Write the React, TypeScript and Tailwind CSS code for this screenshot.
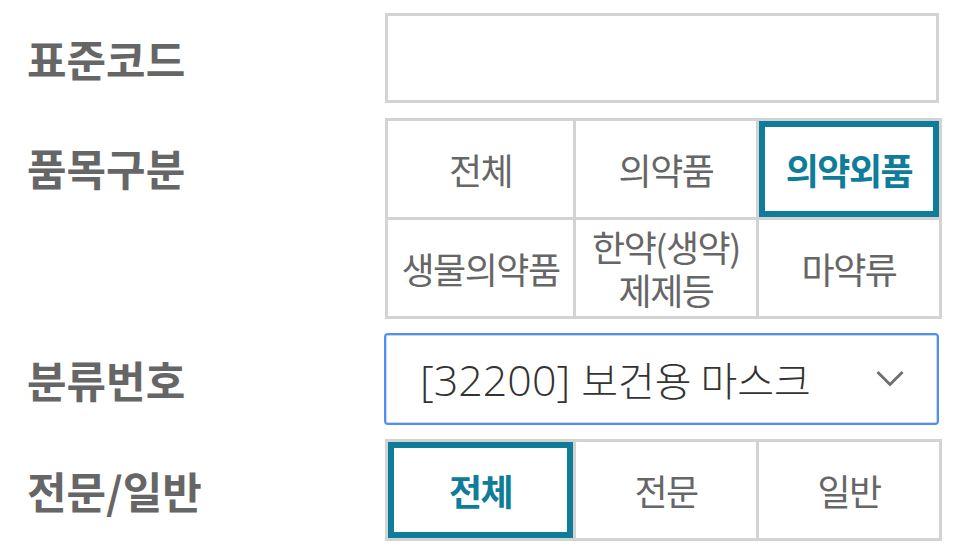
import { useState } from "react";

const itemTypes = [
    ["전체"],
    ["의약품"],
    ["의약외품"],
    ["생물의약품"],
    ["한약(생약)", "제제등"],
    ["마약류"],
];

const etcTypes = ["전체", "전문", "일반"];

export default function App() {
    const [itemType, setItemType] = useState(2);
    const [etcType, setEtcType] = useState(0);

    return (
        <div className="w-[968px] h-[551px] bg-white pt-[13px] font-['Noto_Sans_CJK_KR',sans-serif]">
            {/* 표준코드 */}
            <div className="flex items-center">
                <Label text="표준코드" />
                <input
                    type="text"
                    className="w-[554px] h-[90px] border-[3px] border-[#d3d3d3] bg-white outline-none px-4 text-[36px] text-[#333]"
                />
            </div>

            {/* 품목구분 */}
            <div className="flex items-start mt-[15px]">
                <div className="h-[99px] flex items-center">
                    <Label text="품목구분" />
                </div>
                <OptionGrid
                    items={itemTypes}
                    selected={itemType}
                    onSelect={setItemType}
                />
            </div>

            {/* 분류번호 */}
            <div className="flex items-center mt-[14px]">
                <Label text="분류번호" />
                <div className="-ml-px w-[555px] h-[92px] border-2 border-[#4f8ff6] rounded-[4px] bg-white shadow-[inset_0_0_0_1px_#c9d9f2] flex items-center justify-between pl-[34px] pr-[32px]">
                    <div className="flex items-baseline text-[#333] leading-none whitespace-nowrap font-light">
                        <span className="font-['Open_Sans',sans-serif] text-[43px]">
                            [32200]
                        </span>
                        <span className="ml-[11px] text-[40px]">보건용 마스크</span>
                    </div>
                    <svg width="30" height="20" viewBox="0 0 30 20" fill="none">
                        <path
                            d="M2.5 3 L15 15.5 L27.5 3"
                            stroke="#707070"
                            strokeWidth="3"
                        />
                    </svg>
                </div>
            </div>

            {/* 전문/일반 */}
            <div className="flex items-center mt-[14px]">
                <Label text="전문/일반" />
                <OptionGrid
                    items={etcTypes.map((t) => [t])}
                    selected={etcType}
                    onSelect={setEtcType}
                />
            </div>
        </div>
    );
}

function Label({ text }: { text: string }) {
    return (
        <div className="w-[385px] pl-[27px] text-[43px] leading-none font-bold text-[#666] whitespace-nowrap">
            {text}
        </div>
    );
}

function OptionGrid({
    items,
    selected,
    onSelect,
}: {
    items: string[][];
    selected: number;
    onSelect: (i: number) => void;
}) {
    return (
        <div className="w-[557px] grid grid-cols-[188px_183px_183px] border-l-[3px] border-t-[3px] border-[#d3d3d3] bg-white">
            {items.map((lines, i) => (
                <button
                    key={i}
                    onClick={() => onSelect(i)}
                    className="h-[99px] border-r-[3px] border-b-[3px] border-[#d3d3d3]"
                >
                    <div
                        className={`w-full h-full flex flex-col items-center justify-center text-[36px] leading-[43px] tracking-[-1.5px] whitespace-nowrap ${
                            i === selected
                                ? "border-[6px] border-[#0f7d9a] font-bold text-[#0f7d9a]"
                                : "text-[#666]"
                        }`}
                    >
                        {lines.map((line) => (
                            <span key={line}>{line}</span>
                        ))}
                    </div>
                </button>
            ))}
        </div>
    );
}
